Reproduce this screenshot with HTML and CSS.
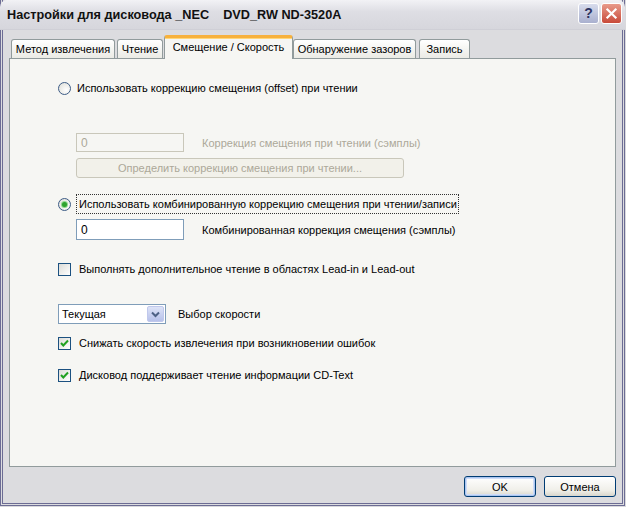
FILE: index.html
```html
<!DOCTYPE html>
<html>
<head>
<meta charset="utf-8">
<link rel="stylesheet" href="styles.css">
</head>
<body>
<div class="window">
  <div class="titlebar">
    <span class="title">Настройки для дисковода _NEC    DVD_RW ND-3520A</span>
    <div class="tbtns">
      <span class="tbtn help">?</span>
      <span class="tbtn close"><svg width="21" height="21" viewBox="0 0 21 21"><path d="M6 6 L15 15 M15 6 L6 15" stroke="#fff" stroke-width="2.4" stroke-linecap="square"/></svg></span>
    </div>
  </div>
  <div class="tabs">
    <div class="tab t1">Метод извлечения</div>
    <div class="tab t2">Чтение</div>
    <div class="tab t3 sel">Смещение / Скорость</div>
    <div class="tab t4">Обнаружение зазоров</div>
    <div class="tab t5">Запись</div>
  </div>
  <div class="panel">
    <div class="row r1">
      <span class="radio"></span><span class="lbl">Использовать коррекцию смещения (offset) при чтении</span>
    </div>
    <div class="row r-in1 indent">
      <span class="input dis">0</span><span class="side dis-text">Коррекция смещения при чтении (сэмплы)</span>
    </div>
    <div class="row r-btn indent">
      <span class="pbtn dis-text">Определить коррекцию смещения при чтении...</span>
    </div>
    <div class="row r2">
      <span class="radio on"></span><span class="lbl focus">Использовать комбинированную коррекцию смещения при чтении/записи</span>
    </div>
    <div class="row r-in2 indent">
      <span class="input">0</span><span class="side">Комбинированная коррекция смещения (сэмплы)</span>
    </div>
    <div class="row r-cb3">
      <span class="check"></span><span class="lbl cl">Выполнять дополнительное чтение в областях Lead-in и Lead-out</span>
    </div>
    <div class="row r-combo">
      <span class="combo"><span class="cval">Текущая</span><span class="cbtn"><svg width="9" height="7" viewBox="0 0 9 7"><path d="M1 1.5 L4.5 5 L8 1.5" fill="none" stroke="#4d6185" stroke-width="2"/></svg></span></span><span class="cside">Выбор скорости</span>
    </div>
    <div class="row r-cb4">
      <span class="check on"><svg width="11" height="11" viewBox="0 0 11 11"><path d="M2 5 L4.3 7.5 L9 2.5" fill="none" stroke="#21a121" stroke-width="2"/></svg></span><span class="lbl cl">Снижать скорость извлечения при возникновении ошибок</span>
    </div>
    <div class="row r-cb5">
      <span class="check on"><svg width="11" height="11" viewBox="0 0 11 11"><path d="M2 5 L4.3 7.5 L9 2.5" fill="none" stroke="#21a121" stroke-width="2"/></svg></span><span class="lbl cl">Дисковод поддерживает чтение информации CD-Text</span>
    </div>
  </div>
  <div class="footer">
    <span class="btn default">OK</span>
    <span class="btn">Отмена</span>
  </div>
</div>
</body>
</html>
```

FILE: styles.css
```css
* { box-sizing: border-box; }
html, body { margin: 0; padding: 0; }
body {
  width: 626px;
  height: 507px;
  overflow: hidden;
  background: #d9d9dc;
  font-family: "Liberation Sans", Arial, sans-serif;
  font-size: 11px;
  color: #000;
}
.window {
  width: 625px;
  height: 506px;
  display: flex;
  flex-direction: column;
  border: 3px double #6c6c94;
  border-top: none;
  background: #dcdcdf;
}
.titlebar {
  height: 30px;
  margin: 0 -3px;
  display: flex;
  align-items: center;
  justify-content: space-between;
  padding: 0 3px 0 7px;
  border-radius: 7px 7px 0 0;
  background: linear-gradient(#f2f2f5, #dedee4 40%, #d6d6dc);
  border-bottom: 1px solid #cfcfd6;
}
.title {
  font-weight: bold;
  font-size: 12.7px;
  white-space: pre;
  color: #111;
  margin-top: 1px;
}
.tbtns { display: flex; gap: 2px; margin-top: -3px; }
.tbtn {
  width: 21px;
  height: 21px;
  border-radius: 3px;
  border: 1px solid #fff;
  display: flex;
  align-items: center;
  justify-content: center;
}
.help {
  background: linear-gradient(#d8dcec, #a9b0cf);
  color: #2d3461;
  font-weight: bold;
  font-size: 14px;
}
.close {
  background: linear-gradient(#e89a8a, #c84a3a);
}
.close svg { display: block; }
.tabs {
  height: 24px;
  margin-top: 4px;
  display: flex;
  align-items: flex-end;
  padding-left: 8px;
  position: relative;
  z-index: 2;
}
.tab {
  height: 19px;
  border: 1px solid #919b9c;
  border-bottom: none;
  border-radius: 3px 3px 0 0;
  background: linear-gradient(#ffffff, #ebebe5);
  text-align: center;
  line-height: 18px;
  white-space: nowrap;
}
.t1 { width: 104px; margin-right: 2px; }
.t2 { width: 46px; margin-right: 1px; }
.t3 { width: 129px; }
.t4 { width: 123px; margin-right: 3px; }
.t5 { width: 51px; }
.tab.sel {
  height: 24px;
  margin-bottom: -1px;
  background: #f6f6f3;
  border-top: 3px solid #f7b13c;
  box-shadow: inset 0 1px 0 #ffd77a;
  line-height: 19px;
  padding-bottom: 3px;
}
.panel {
  margin: 0 6px 0 6px;
  height: 409px;
  border: 1px solid #919b9c;
  background: #f6f6f3;
  padding: 22px 0 0 48px;
  display: flex;
  flex-direction: column;
  position: relative;
  z-index: 1;
}
.row { display: flex; align-items: center; }
.indent { padding-left: 18px; }
.r1 { height: 14px; }
.r-in1 { height: 19px; margin-top: 38px; }
.r-btn { height: 20px; margin-top: 6px; }
.r2 { height: 20px; margin-top: 16px; }
.r-in2 { height: 21px; margin-top: 5px; }
.r-cb3 { height: 14px; margin-top: 22px; }
.r-combo { height: 20px; margin-top: 28px; }
.r-cb4 { height: 14px; margin-top: 12px; }
.r-cb5 { height: 14px; margin-top: 18px; }

.radio {
  width: 13px;
  height: 13px;
  border-radius: 50%;
  border: 1px solid #3d5c86;
  background: radial-gradient(circle at 65% 65%, #ffffff, #e4e4de 80%);
  display: flex;
  align-items: center;
  justify-content: center;
  flex: none;
}
.radio.on::after {
  content: "";
  width: 5px;
  height: 5px;
  border-radius: 50%;
  background: #2fa32f;
  box-shadow: 0 0 0 1px #8fd88f;
}
.lbl { margin-left: 6px; white-space: nowrap; }
.lbl.focus {
  outline: 1px dotted #333;
  padding: 3px 1px 3px 2px;
  margin-left: 6px;
}
.lbl.cl { margin-left: 8px; }
.check {
  width: 13px;
  height: 13px;
  border: 1px solid #1c5180;
  background: linear-gradient(135deg, #dcdcd7, #ffffff);
  display: flex;
  align-items: center;
  justify-content: center;
  flex: none;
}
.check svg { display: block; }
.input {
  width: 108px;
  height: 100%;
  border: 1px solid #7f9db9;
  background: #fff;
  padding-left: 4px;
  display: flex;
  align-items: center;
  font-size: 12px;
}
.input.dis {
  border-color: #c9c7ba;
  background: #f6f6f3;
  color: #aca899;
}
.side { margin-left: 18px; white-space: nowrap; }
.dis-text { color: #aca899; }
.pbtn {
  width: 328px;
  height: 20px;
  border: 1px solid #c9c7ba;
  border-radius: 3px;
  background: #f2f1ea;
  display: flex;
  align-items: center;
  justify-content: center;
}
.combo {
  width: 108px;
  height: 20px;
  border: 1px solid #7f9db9;
  background: #fff;
  display: flex;
  align-items: stretch;
}
.cval { flex: 1; padding-left: 3px; display: flex; align-items: center; }
.cbtn {
  width: 17px;
  margin: 1px;
  border-radius: 2px;
  background: linear-gradient(#dde3f7, #b7c1ea);
  border: 1px solid #c0c8ec;
  display: flex;
  align-items: center;
  justify-content: center;
}
.cbtn svg { display: block; }
.cside { margin-left: 12px; white-space: nowrap; }
.footer {
  display: flex;
  justify-content: flex-end;
  gap: 8px;
  padding: 9px 6px 0 0;
}
.btn {
  width: 72px;
  height: 21px;
  border: 1px solid #003c74;
  border-radius: 3px;
  background: linear-gradient(#ffffff, #f0efe9 70%, #d8d6cc);
  display: flex;
  align-items: center;
  justify-content: center;
}
.btn.default {
  box-shadow: inset 0 0 0 1px #abc6f0, inset 0 0 0 2px #cfdcf7;
}
```
